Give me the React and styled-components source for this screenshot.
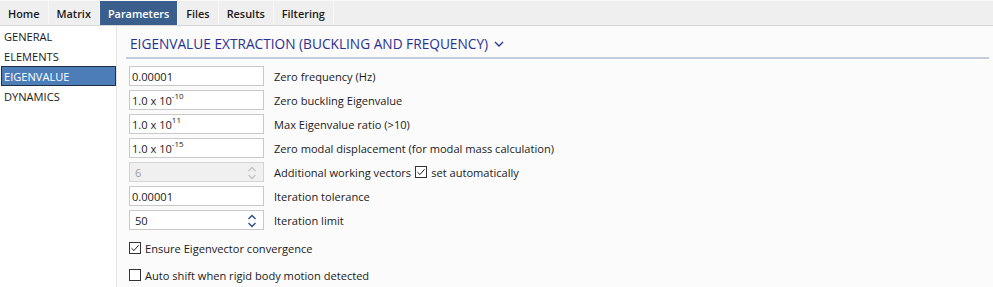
import React from "react";
import styled, { createGlobalStyle } from "styled-components";

const Global = createGlobalStyle`
  html, body { margin: 0; padding: 0; background: #fbfbfb; }
  body { font-family: "Open Sans", "Noto Sans", sans-serif; font-size: 11.1px; color: #1a1a1a; }
  * { box-sizing: border-box; }
`;

const Page = styled.div`
  width: 993px;
  height: 287px;
  display: flex;
  flex-direction: column;
  overflow: hidden;
  background: #fbfbfb;
`;

const TabBar = styled.div`
  height: 26px;
  display: flex;
  background: #efefef;
  border-top: 1px solid #f8f8f8;
  border-bottom: 1px solid #d6d6d6;
`;

const Tab = styled.div`
  padding: 0 8px;
  height: 24px;
  display: flex;
  align-items: center;
  font-weight: 600;
  font-size: 10.9px;
  border-right: 1px solid #f7f7f7;
  background: ${p => (p.$active ? "#3b5f8c" : "transparent")};
  color: ${p => (p.$active ? "#ffffff" : "#1a1a1a")};
`;

const Body = styled.div`
  flex: 1;
  display: flex;
`;

const Sidebar = styled.div`
  width: 117px;
  border-right: 1px solid #e4e4e4;
  background: #ffffff;
  display: flex;
  flex-direction: column;
`;

const NavItem = styled.div`
  height: 20px;
  margin-left: 1px;
  padding-left: 2px;
  display: flex;
  align-items: center;
  font-size: 11.1px;
  color: ${p => (p.$active ? "#ffffff" : "#1a1a1a")};
  background: ${p => (p.$active ? "#4d7db8" : "transparent")};
  border: 1px solid ${p => (p.$active ? "#1f2f45" : "transparent")};
  width: 115px;
`;

const Content = styled.div`
  flex: 1;
  padding: 0 4px 0 9px;
  display: flex;
  flex-direction: column;
`;

const Header = styled.div`
  height: 33px;
  border-bottom: 2px solid #c3cedb;
  display: flex;
  align-items: flex-end;
  padding: 0 0 4px 4px;
  gap: 6px;
  color: #2a3192;
  font-size: 13.7px;
`;

const Form = styled.div`
  padding: 7px 0 0 3px;
  display: flex;
  flex-direction: column;
  gap: 4px;
`;

const Row = styled.div`
  display: flex;
  align-items: center;
  height: 20px;
  gap: 10px;
`;

const Field = styled.div`
  width: 135px;
  height: 20px;
  border: 1px solid ${p => (p.$disabled ? "#d4d4d4" : "#c9c9c9")};
  background: ${p => (p.$disabled ? "#f0f0f0" : "#ffffff")};
  color: ${p => (p.$disabled ? "#a0a0a0" : "#1a1a1a")};
  display: flex;
  align-items: center;
  padding-left: ${p => (p.$spin ? 5 : 2)}px;
  position: relative;
  font-size: 11.1px;
`;

const Sup = styled.sup`
  font-size: 8px;
  position: relative;
  top: -1px;
  vertical-align: super;
  line-height: 0;
`;

const Spin = styled.svg`
  position: absolute;
  right: 6px;
  top: 2px;
`;

const Label = styled.span`
  font-size: 11.1px;
  color: #1a1a1a;
  display: flex;
  align-items: center;
  gap: 4px;
`;

const Box = styled.span`
  width: 12px;
  height: 12px;
  border: 1px solid #333;
  background: #fff;
  display: inline-flex;
  align-items: center;
  justify-content: center;
`;

const CheckRow = styled.div`
  display: flex;
  align-items: center;
  gap: 4px;
  height: 20px;
  margin-top: ${p => p.$mt}px;
`;

const Check = ({ on }) => (
  <Box>
    {on && (
      <svg width="10" height="10" viewBox="0 0 10 10">
        <path d="M1.5 5.2 L4 7.6 L8.6 2.2" fill="none" stroke="#222" strokeWidth="1" />
      </svg>
    )}
  </Box>
);

const Spinner = ({ color }) => (
  <Spin width="10" height="16" viewBox="0 0 10 16">
    <path d="M1.5 6 L5 2.5 L8.5 6" fill="none" stroke={color} strokeWidth="1.4" />
    <path d="M1.5 10 L5 13.5 L8.5 10" fill="none" stroke={color} strokeWidth="1.4" />
  </Spin>
);

const Exp = ({ b, e }) => (
  <span>
    {b}
    <Sup>{e}</Sup>
  </span>
);

export default function App() {
  const tabs = ["Home", "Matrix", "Parameters", "Files", "Results", "Filtering"];
  return (
    <Page>
      <Global />
      <TabBar>
        {tabs.map(t => (
          <Tab key={t} $active={t === "Parameters"}>
            {t}
          </Tab>
        ))}
      </TabBar>
      <Body>
        <Sidebar>
          {["GENERAL", "ELEMENTS", "EIGENVALUE", "DYNAMICS"].map(n => (
            <NavItem key={n} $active={n === "EIGENVALUE"}>
              {n}
            </NavItem>
          ))}
        </Sidebar>
        <Content>
          <Header>
            <span>EIGENVALUE EXTRACTION (BUCKLING AND FREQUENCY)</span>
            <svg width="10" height="8" viewBox="0 0 10 8" style={{ marginBottom: 5 }}>
              <path d="M1 2 L5 6 L9 2" fill="none" stroke="#2a3192" strokeWidth="1.3" />
            </svg>
          </Header>
          <Form>
            <Row>
              <Field>0.00001</Field>
              <Label>Zero frequency (Hz)</Label>
            </Row>
            <Row>
              <Field><Exp b="1.0 x 10" e="-10" /></Field>
              <Label>Zero buckling Eigenvalue</Label>
            </Row>
            <Row>
              <Field><Exp b="1.0 x 10" e="11" /></Field>
              <Label>Max Eigenvalue ratio (&gt;10)</Label>
            </Row>
            <Row>
              <Field><Exp b="1.0 x 10" e="-15" /></Field>
              <Label>Zero modal displacement (for modal mass calculation)</Label>
            </Row>
            <Row>
              <Field $disabled $spin>
                6
                <Spinner color="#c4c4c4" />
              </Field>
              <Label>
                Additional working vectors <Check on /> set automatically
              </Label>
            </Row>
            <Row>
              <Field>0.00001</Field>
              <Label>Iteration tolerance</Label>
            </Row>
            <Row>
              <Field $spin>
                50
                <Spinner color="#2c4d80" />
              </Field>
              <Label>Iteration limit</Label>
            </Row>
            <CheckRow $mt={4}>
              <Check on />
              <Label>Ensure Eigenvector convergence</Label>
            </CheckRow>
            <CheckRow $mt={3}>
              <Check />
              <Label>Auto shift when rigid body motion detected</Label>
            </CheckRow>
          </Form>
        </Content>
      </Body>
    </Page>
  );
}
